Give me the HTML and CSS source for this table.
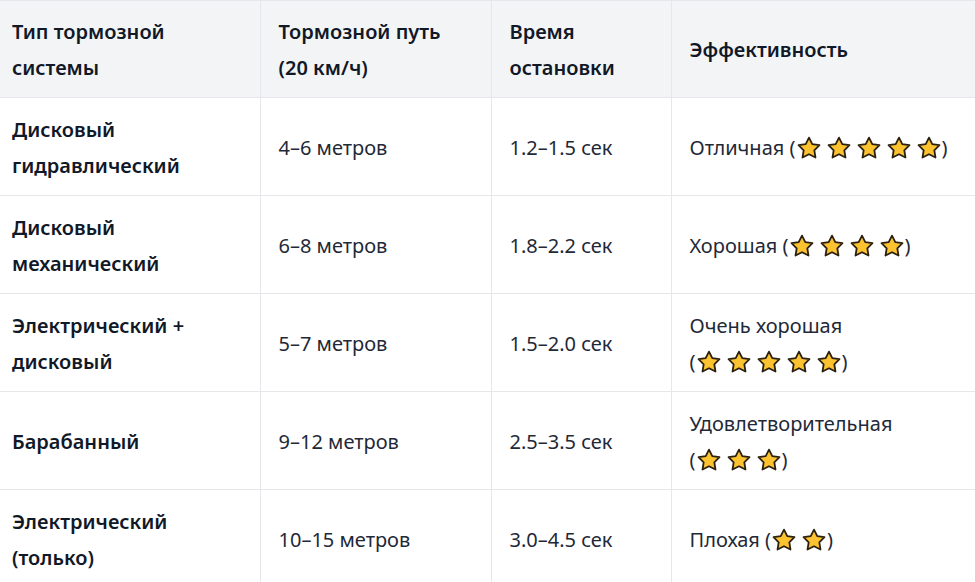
FILE: index.html
```html
<!DOCTYPE html>
<html lang="ru">
<head>
<meta charset="utf-8">
<link rel="stylesheet" href="styles.css">
</head>
<body>
<svg width="0" height="0" class="defs">
  <defs>
    <symbol id="star" viewBox="0 0 24 24">
      <path d="M12 1.6 L15.29 8.07 L22.46 9.2 L17.33 14.33 L18.47 21.5 L12 18.2 L5.53 21.5 L6.67 14.33 L1.54 9.2 L8.71 8.07 Z" fill="#fdc22f" stroke="#2b2110" stroke-width="1.8" stroke-linejoin="round"/>
    </symbol>
  </defs>
</svg>
<table class="brakes">
  <colgroup>
    <col class="c1"><col class="c2"><col class="c3"><col class="c4">
  </colgroup>
  <thead>
    <tr>
      <th>Тип тормозной системы</th>
      <th>Тормозной путь (20 км/ч)</th>
      <th>Время остановки</th>
      <th>Эффективность</th>
    </tr>
  </thead>
  <tbody>
    <tr>
      <td class="name">Дисковый гидравлический</td>
      <td>4–6 метров</td>
      <td>1.2–1.5 сек</td>
      <td>Отличная <span class="stars">(<svg class="star"><use href="#star"/></svg><svg class="star"><use href="#star"/></svg><svg class="star"><use href="#star"/></svg><svg class="star"><use href="#star"/></svg><svg class="star"><use href="#star"/></svg>)</span></td>
    </tr>
    <tr>
      <td class="name">Дисковый механический</td>
      <td>6–8 метров</td>
      <td>1.8–2.2 сек</td>
      <td>Хорошая <span class="stars">(<svg class="star"><use href="#star"/></svg><svg class="star"><use href="#star"/></svg><svg class="star"><use href="#star"/></svg><svg class="star"><use href="#star"/></svg>)</span></td>
    </tr>
    <tr>
      <td class="name">Электрический + дисковый</td>
      <td>5–7 метров</td>
      <td>1.5–2.0 сек</td>
      <td>Очень хорошая <span class="stars">(<svg class="star"><use href="#star"/></svg><svg class="star"><use href="#star"/></svg><svg class="star"><use href="#star"/></svg><svg class="star"><use href="#star"/></svg><svg class="star"><use href="#star"/></svg>)</span></td>
    </tr>
    <tr>
      <td class="name">Барабанный</td>
      <td>9–12 метров</td>
      <td>2.5–3.5 сек</td>
      <td>Удовлетворительная <span class="stars">(<svg class="star"><use href="#star"/></svg><svg class="star"><use href="#star"/></svg><svg class="star"><use href="#star"/></svg>)</span></td>
    </tr>
    <tr>
      <td class="name">Электрический (только)</td>
      <td>10–15 метров</td>
      <td>3.0–4.5 сек</td>
      <td>Плохая <span class="stars">(<svg class="star"><use href="#star"/></svg><svg class="star"><use href="#star"/></svg>)</span></td>
    </tr>
  </tbody>
</table>
</body>
</html>
```
FILE: styles.css
```css
html, body {
  margin: 0;
  padding: 0;
  background: #ffffff;
  overflow: hidden;
}
.defs {
  position: absolute;
  width: 0;
  height: 0;
}
.brakes {
  border-collapse: collapse;
  table-layout: fixed;
  width: 1000px;
  font-family: "Noto Sans", "Open Sans", sans-serif;
  font-size: 20px;
  line-height: 36px;
  color: #1f2328;
}
.c1 { width: 260px; }
.c2 { width: 231px; }
.c3 { width: 180px; }
.c4 { width: 329px; }
.brakes th,
.brakes td {
  border: 1px solid #e5e7eb;
  padding: 14px 18px 11px 18px;
  text-align: left;
  vertical-align: middle;
}
.brakes thead th {
  border-top: 1px solid #e5e7eb;
  padding-top: 13px;
}
.brakes tr > :first-child {
  border-left: none;
  padding-left: 12px;
}
.brakes th {
  background: #f3f4f6;
  font-weight: 600;
  color: #111827;
}
.brakes td {
  color: #1f2937;
}
.brakes td.name {
  font-weight: 600;
  color: #111827;
}
.stars {
  white-space: nowrap;
}
.star {
  width: 24px;
  height: 24px;
  margin: 0 3px;
  vertical-align: -5px;
}
.star:first-of-type {
  margin-left: 1px;
}
.star:last-of-type {
  margin-right: 1px;
}
```
